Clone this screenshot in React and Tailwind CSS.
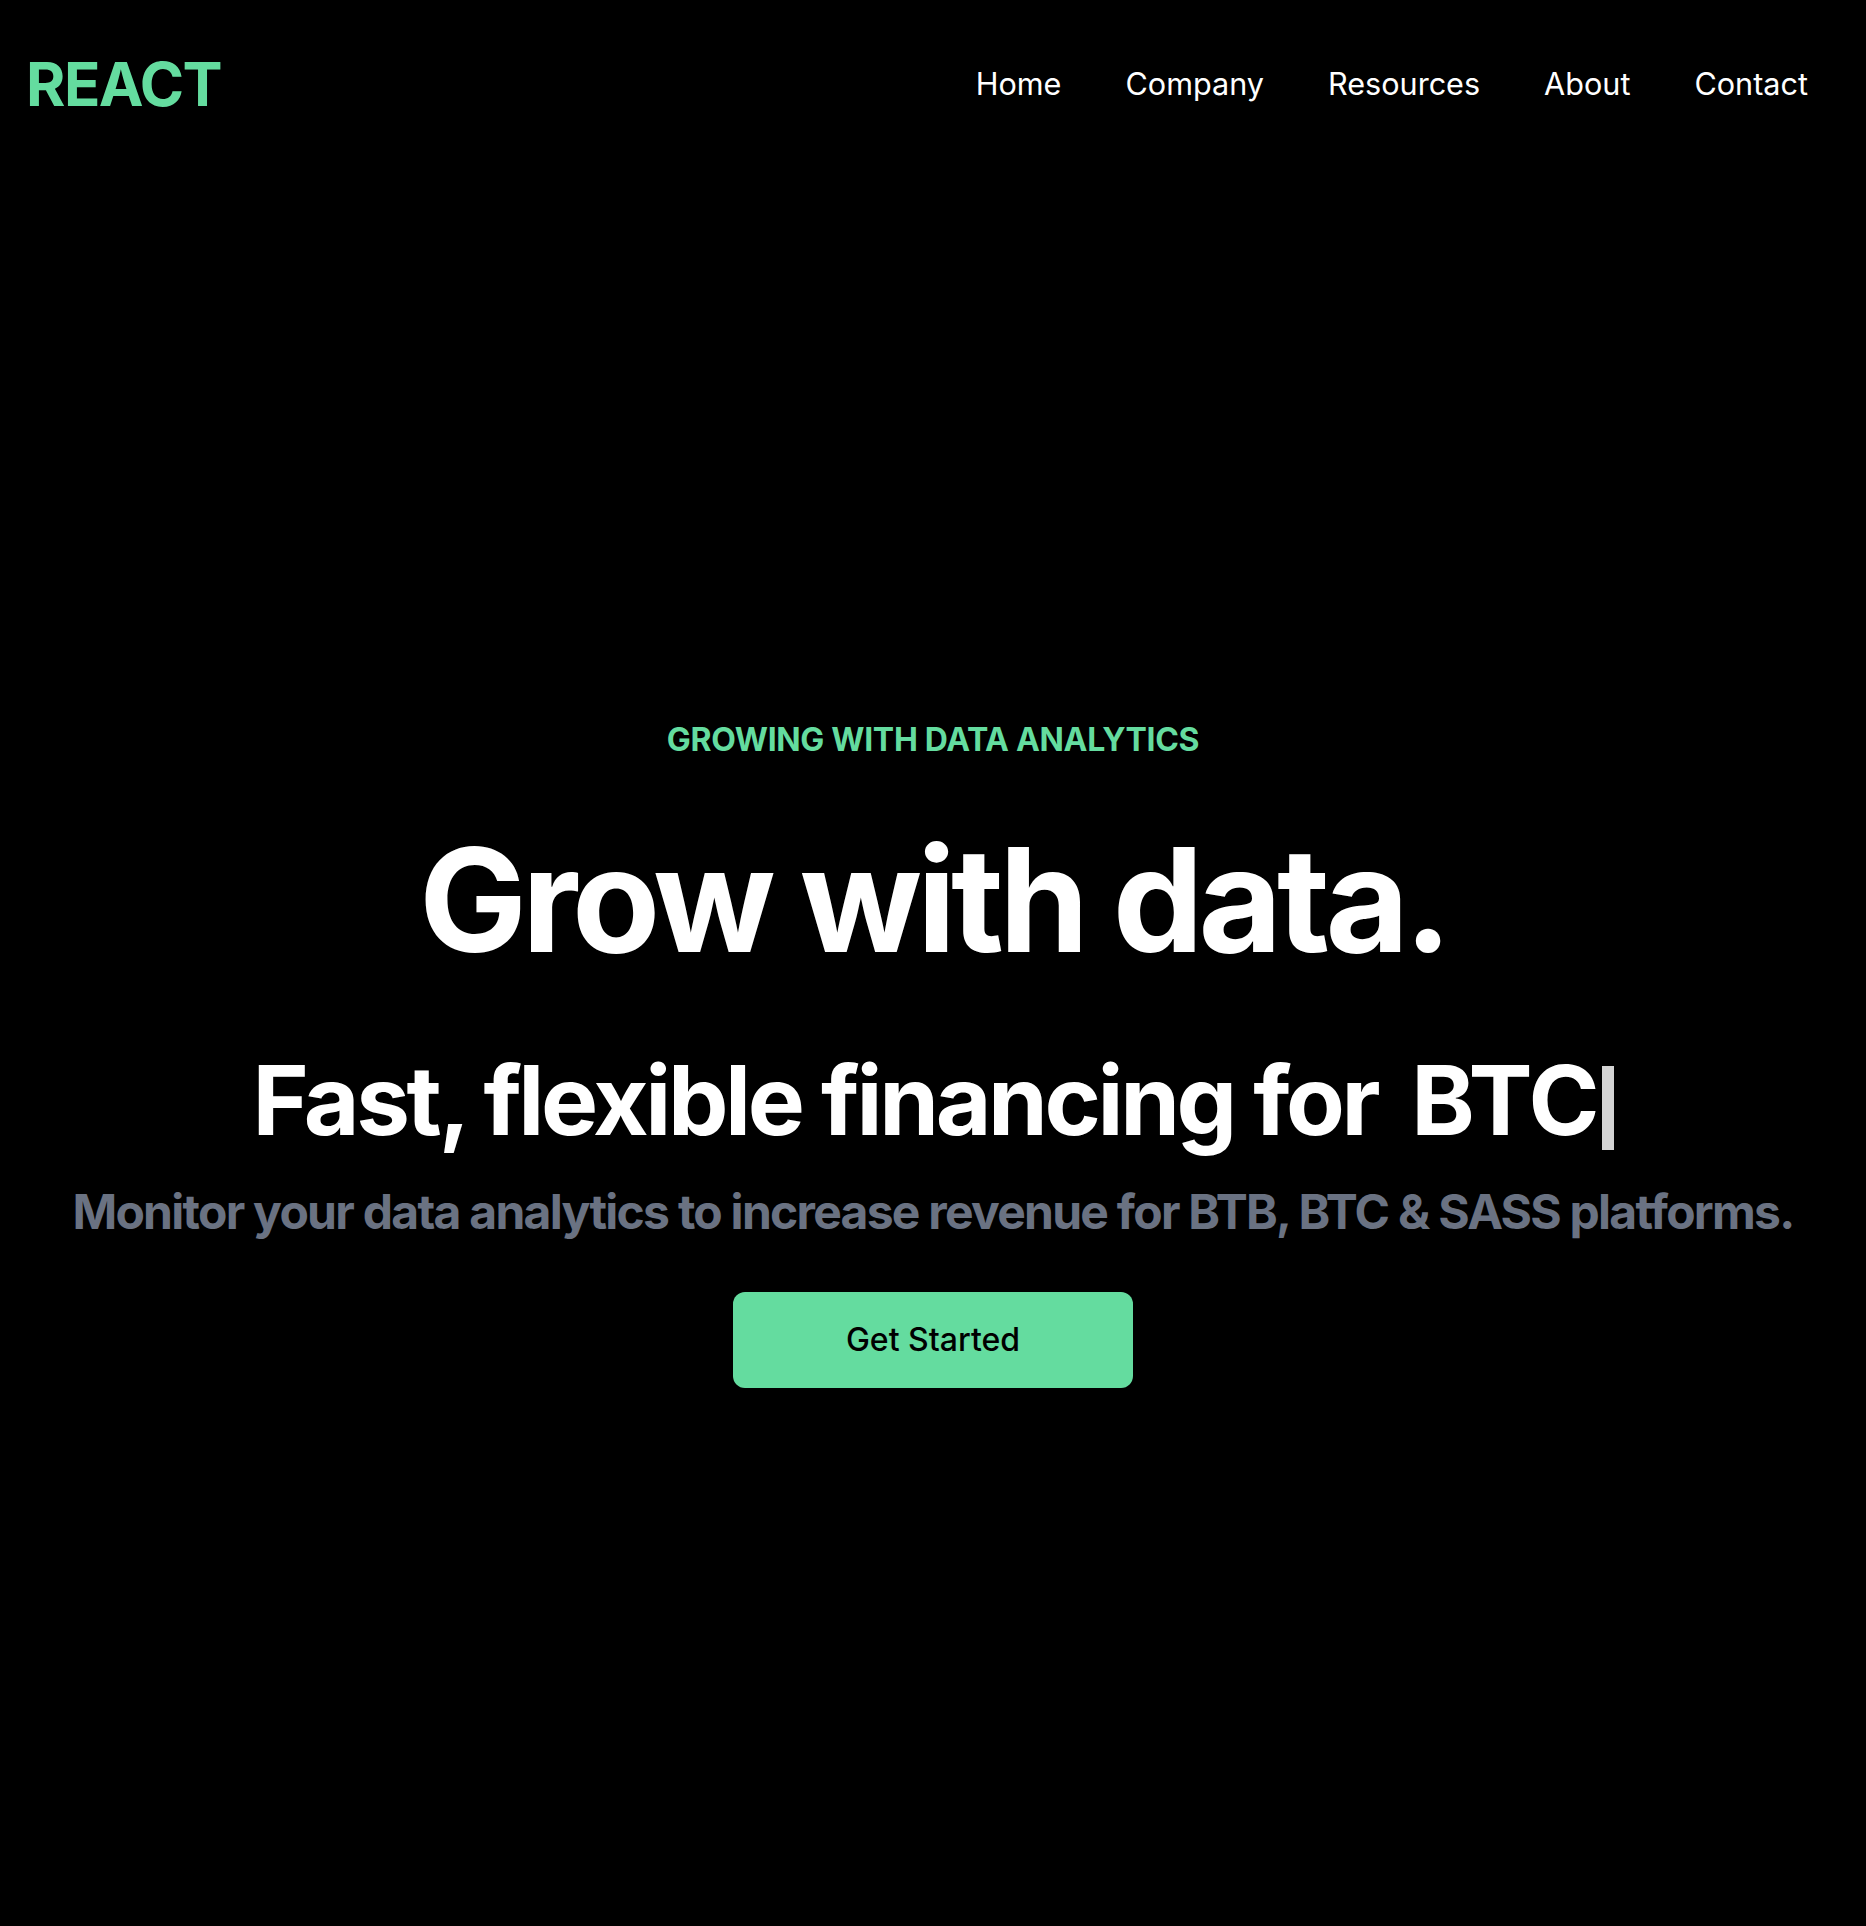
const links = ["Home", "Company", "Resources", "About", "Contact"];

const Navbar = () => {
  return (
    <div className="flex justify-between items-center h-[168px] px-[26px] text-white">
      <h1 className="text-[60px] font-bold text-[#64dc9f] leading-none tracking-[-0.025em]">REACT</h1>
      <ul className="flex">
        {links.map((l) => (
          <li key={l} className="px-8 text-[30.6px] leading-[48px]">
            {l}
          </li>
        ))}
      </ul>
    </div>
  );
};

const Hero = () => {
  return (
    <div className="text-white">
      <div className="w-full mx-auto pt-[532px] text-center flex flex-col">
        <p className="text-[#64dc9f] font-bold p-4 text-[32px] leading-[48px] tracking-[-0.01em]">
          GROWING WITH DATA ANALYTICS
        </p>
        <h1 className="text-[144px] leading-none font-bold py-12 tracking-[-0.035em]">
          Grow with data.
        </h1>
        <div className="flex justify-center items-center py-8">
          <p className="text-[96px] leading-none font-bold tracking-[-0.035em]">
            Fast, flexible financing for
          </p>
          <p className="text-[96px] leading-none font-bold pl-[34px] tracking-[-0.01em] flex items-center">
            BTC
            <span className="inline-block w-[12px] h-[84px] bg-[#d4d4d4] ml-[3px] translate-y-[8px]"></span>
          </p>
        </div>
        <p className="text-[48px] leading-[64px] font-bold text-gray-500 tracking-[-0.036em]">
          Monitor your data analytics to increase revenue for BTB, BTC &amp; SASS platforms.
        </p>
        <button className="bg-[#64dc9f] w-[400px] rounded-xl font-medium my-12 mx-auto py-6 text-black text-[32px] leading-[48px]">
          Get Started
        </button>
      </div>
    </div>
  );
};

export default function App() {
  return (
    <div className="min-h-[1926px] bg-black" style={{ fontFamily: "Inter, 'Noto Sans', sans-serif" }}>
      <Navbar />
      <Hero />
    </div>
  );
}
